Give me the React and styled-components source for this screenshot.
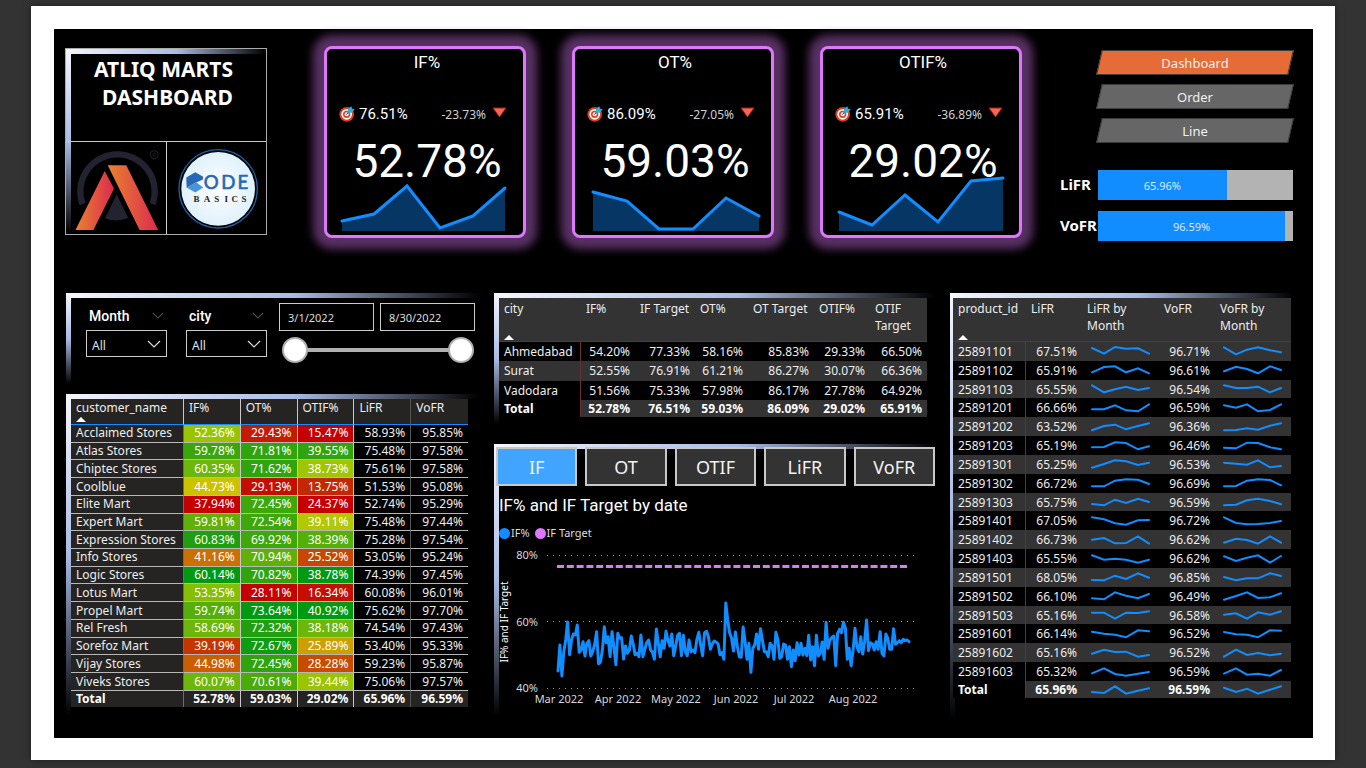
import React, { useState } from 'react';
import styled, { createGlobalStyle, css } from 'styled-components';

const sans = '"Noto Sans", "Open Sans", sans-serif';
const din = 'Roboto, "Noto Sans", sans-serif';

const GlobalStyle = createGlobalStyle`
  * { box-sizing: border-box; }
  body { margin: 0; background: #333; color: #fff; font-family: ${sans}; }
  button, input, select { font-family: inherit; }
`;

const Page = styled.div`
  min-height: 100vh;
  padding: 6px 31px 8px;
`;
const Sheet = styled.div`
  background: #fff;
  padding: 23px 22px 22px 23px;
  box-shadow: 0 0 8px rgba(0, 0, 0, 0.4);
`;
const Canvas = styled.main`
  background: #000;
  padding: 17px 20px 18px 11px;
`;
const TopRow = styled.header`
  display: grid;
  grid-template-columns: 202fr 57fr 698fr 38fr 233fr;
  height: 247px;
`;

/* ---------- gradient frame shared by every panel ---------- */
const frame = css`
  background:
    linear-gradient(to bottom, #f4f6fc, #a9bce6 50%, #000) left top / 5px 100% no-repeat,
    linear-gradient(to right, #f4f6fc, #a9bce6 55%, #000) left top / 100% 5px no-repeat,
    #000;
`;

/* ---------- brand ---------- */
const Brand = styled.section`
  ${frame}
  grid-column: 1;
  margin-top: 2px;
  height: 187px;
  display: grid;
  grid-template-rows: 93px 92px;
  border: 1px solid #aaa;
`;
const BrandTitle = styled.h1`
  margin: 0;
  padding: 6px 33px 0 0;
  text-align: right;
  font-size: 21px;
  line-height: 28px;
  font-weight: 700;
  border-bottom: 1px solid #c8c8c8;
`;
const Logos = styled.div`
  display: grid;
  grid-template-columns: 95fr 100fr;
  padding-left: 5px;
  min-height: 0;
`;
const LogoCell = styled.div`
  display: flex;
  min-width: 0;
  min-height: 0;
  & + & { border-left: 1px solid #ccc; }
  svg { width: 100%; height: 100%; }
`;

/* ---------- KPI cards ---------- */
const Kpis = styled.section`
  grid-column: 3;
  display: grid;
  grid-template-columns: repeat(3, 1fr);
  gap: 46px;
`;
const KpiCard = styled.article`
  height: 192px;
  border: 3px solid #dd78fb;
  border-radius: 8px;
  box-shadow: 0 0 8px 11px #583063;
  background: #000;
`;
const KpiTitle = styled.h2`
  margin: 1px 0 28px;
  padding-left: 4px;
  font: 400 17px/24px ${din};
  text-align: center;
`;
const KpiMeta = styled.div`
  display: flex;
  align-items: center;
  height: 24px;
  padding: 0 16px 0 12px;
  svg { flex: none; }
`;
const KpiTarget = styled.span`
  font: 400 15px/24px ${din};
  margin: 0 auto 0 4px;
`;
const KpiDelta = styled.span`
  font-size: 12px;
  color: #d0d0d0;
  margin-right: 6px;
`;
const KpiValue = styled.div`
  font: 400 46px/50px ${din};
  text-align: center;
  margin-top: 10px;
  padding-left: 4px;
`;
const Area = styled.svg`
  display: block;
  width: 100%;
  height: 48px;
  margin-top: -3px;
  overflow: visible;
`;

/* ---------- right hand column ---------- */
const Side = styled.section`
  grid-column: 5;
`;
const Nav = styled.nav`
  display: grid;
  gap: 9px;
  padding: 4px 2px 0 39px;
`;
const NavButton = styled.button`
  position: relative;
  z-index: 0;
  height: 25px;
  padding: 0;
  border: 0;
  background: none;
  color: #f0f0f0;
  font-size: 13px;
  &::before {
    content: '';
    position: absolute;
    inset: 0;
    z-index: -1;
    transform: skewX(-13deg);
    background: ${p => (p.$active ? '#e66c37' : '#666')};
    border: 1px solid #3c3c3c;
  }
`;
const Meters = styled.div`
  display: grid;
  gap: 11px;
  margin-top: 27px;
`;
const MeterRow = styled.div`
  display: grid;
  grid-template-columns: 38px 1fr;
  font-size: 15px;
  line-height: 28px;
  font-weight: 700;
`;
const MeterTrack = styled.div`
  height: 30px;
  background: #b3b3b3;
`;
const MeterFill = styled.div`
  height: 30px;
  background: #118dff;
  color: #d8eaff;
  font-size: 11px;
  font-weight: 400;
  line-height: 31px;
  text-align: center;
`;

/* ---------- lower area ---------- */
const Lower = styled.div`
  display: grid;
  grid-template-columns: 415fr 442fr 343fr;
  gap: 14px;
  align-items: start;
`;
const Column = styled.div`
  display: grid;
  gap: ${p => p.$gap}px;
  padding-left: ${p => p.$inset || 0}px;
  min-width: 0;
`;
const Panel = styled.section`
  ${frame}
  min-height: ${p => p.$h}px;
  padding: 5px ${p => p.$right || 0}px 0 ${p => p.$left || 5}px;
`;

/* ---------- filters ---------- */
const Filters = styled(Panel)`
  display: flex;
  padding: 10px 5px 0 20px;
`;
const Filter = styled.div`
  width: 81px;
  margin-right: ${p => p.$gap}px;
`;
const FilterHead = styled.div`
  display: flex;
  align-items: center;
  justify-content: space-between;
  height: 27px;
  padding: 0 3px 2px 3px;
  label { font: 500 14px/20px ${din}; }
`;
const SelectBox = styled.div`
  position: relative;
  svg { position: absolute; right: 6px; top: 10px; pointer-events: none; }
`;
const Select = styled.select`
  appearance: none;
  display: block;
  width: 100%;
  height: 27px;
  padding: 3px 20px 0 5px;
  border: 1px solid #ccc;
  border-radius: 0;
  background: #000;
  color: #e0e0e0;
  font-size: 12px;
`;
const RangeGroup = styled.div`
  flex: 1;
`;
const DateRow = styled.div`
  display: grid;
  grid-template-columns: 1fr 1fr;
  gap: 6px;
`;
const DateInput = styled.input`
  width: 100%;
  min-width: 0;
  height: 28px;
  padding: 0 8px;
  border: 1px solid #ccc;
  background: #000;
  color: #ddd;
  font-size: 11px;
`;
const Slider = styled.div`
  display: grid;
  align-items: center;
  height: 26px;
  margin: 6px 1px 0 3px;
  background: linear-gradient(#b0b0b0, #b0b0b0) center / 90% 4px no-repeat;
`;
const Thumb = styled.input`
  grid-area: 1 / 1;
  width: 100%;
  height: 26px;
  margin: 0;
  appearance: none;
  background: none;
  pointer-events: none;
  &::-webkit-slider-thumb {
    appearance: none;
    pointer-events: auto;
    width: 26px;
    height: 26px;
    border-radius: 50%;
    border: 2px solid #b0b0b0;
    background: #fff;
  }
`;

/* ---------- tables ---------- */
const Table = styled.table`
  width: 100%;
  table-layout: fixed;
  border-collapse: separate;
  border-spacing: 0;
  background: #000;
  font-size: 12px;
  line-height: 17px;
  white-space: nowrap;
  th, td { padding: 0 5px; font-weight: 400; text-align: right; }
  thead th { text-align: left; vertical-align: top; white-space: normal; color: #eee; }
  th:first-child { text-align: left; }
  tfoot th, tfoot td { font-weight: 700; color: #fff; }
`;
const CustomerTable = styled(Table)`
  height: 308px;
  line-height: 16px;
  color: #eee;
  thead th { height: 26px; background: #252423; border-bottom: 1px solid #118dff; padding-top: 1px; }
  tbody th, tbody td { border-bottom: 1px solid #b8b8b8; }
  tr > * { border-right: 1px solid #c8c8c8; }
  tr > :nth-child(5) { border-right-color: #555; }
  tr > :last-child { border-right: 0; }
  tbody th, tfoot th, tfoot td { background: #252423; }
  tbody th, tfoot th { border-right-color: #1a7fe0; }
`;
const HeatCell = styled.td`
  background: ${p => p.$tone};
  color: #fff;
`;
const StripedTable = styled(Table)`
  color: #eee;
  thead th { height: 44px; background: #333; border-bottom: 1px solid #6b2e32; padding-top: 2px; }
  tbody th, tfoot th { border-right: 1px solid #6b2e32; }
  tbody tr:nth-child(${p => p.$stripe}) > * { background: #333; }
  tfoot td { background: #333; }
`;
const CityTable = styled(StripedTable)`
  height: 119px;
`;
const ProductTable = styled(StripedTable)`
  height: 400px;
`;
const SortMark = styled.svg`
  display: block;
  margin-top: ${p => p.$top}px;
`;
const SparkLine = styled.svg`
  display: block;
  margin: 0 3px 0 auto;
`;

/* ---------- chart ---------- */
const ChartPanel = styled(Panel)`
  padding-top: 3px;
`;
const Tabs = styled.div`
  display: grid;
  grid-template-columns: repeat(5, 1fr);
  gap: 8px;
  margin-left: -3px;
`;
const Tab = styled.button`
  height: 39px;
  padding: 0;
  border: 2px solid #c8c8c8;
  background: ${p => (p.$active ? '#41a4ff' : '#333')};
  color: #f2f2f2;
  font-size: 18px;
`;
const ChartTitle = styled.h2`
  margin: 7px 0;
  font: 400 17px/24px ${din};
`;
const Legend = styled.ul`
  display: flex;
  gap: 5px;
  margin: 0 0 2px;
  padding: 0;
  list-style: none;
  font-size: 11px;
  line-height: 18px;
  color: #ddd;
`;
const LegendItem = styled.li`
  display: flex;
  align-items: center;
  gap: 1px;
  &::before {
    content: '';
    width: 11px;
    height: 11px;
    border-radius: 50%;
    background: ${p => p.$color};
  }
`;
const Chart = styled.svg`
  display: block;
  width: 100%;
  height: auto;
  overflow: visible;
  font-family: ${sans};
  font-size: 11px;
`;

/* ---------- data ---------- */
const kpis = [
  { name: 'IF%', target: '76.51%', delta: '-23.73%', value: '52.78%', pts: [[15, 38], [47, 31], [80, 3], [113, 45], [146, 33], [178, 5]] },
  { name: 'OT%', target: '86.09%', delta: '-27.05%', value: '59.03%', pts: [[18, 9], [52, 18], [84, 46], [118, 46], [151, 15], [184, 33]] },
  { name: 'OTIF%', target: '65.91%', delta: '-36.89%', value: '29.02%', pts: [[16, 29], [49, 42], [82, 12], [115, 39], [148, -2], [180, -5]] },
];

const customers = [
  ['Acclaimed Stores', '52.36%', '#9bc400', '29.43%', '#c41c00', '15.47%', '#c40000', '58.93%', '95.85%'],
  ['Atlas Stores', '59.78%', '#3aa60a', '71.81%', '#30a40c', '39.55%', '#30a40c', '75.48%', '97.58%'],
  ['Chiptec Stores', '60.35%', '#6db60a', '71.62%', '#30a40c', '38.73%', '#a0c603', '75.61%', '97.58%'],
  ['Coolblue', '44.73%', '#cdc200', '29.13%', '#c40e00', '13.75%', '#c42800', '51.53%', '95.08%'],
  ['Elite Mart', '37.94%', '#c40000', '72.45%', '#3ea70a', '24.37%', '#c40000', '52.74%', '95.29%'],
  ['Expert Mart', '59.81%', '#5fb10a', '72.54%', '#3ea70a', '39.11%', '#b4c800', '75.48%', '97.44%'],
  ['Expression Stores', '60.83%', '#1f9f0f', '69.92%', '#3ea70a', '38.39%', '#55ae0a', '75.28%', '97.54%'],
  ['Info Stores', '41.16%', '#cc7000', '70.94%', '#5fb10a', '25.52%', '#c84600', '53.05%', '95.24%'],
  ['Logic Stores', '60.14%', '#009a12', '70.82%', '#30a40c', '38.78%', '#009a12', '74.39%', '97.45%'],
  ['Lotus Mart', '53.35%', '#86bd05', '28.11%', '#c40000', '16.34%', '#c40e00', '60.08%', '96.01%'],
  ['Propel Mart', '59.74%', '#55ae0a', '73.64%', '#009a12', '40.92%', '#009a12', '75.62%', '97.70%'],
  ['Rel Fresh', '58.69%', '#6db60a', '72.32%', '#229f0e', '38.18%', '#6db60a', '74.54%', '97.43%'],
  ['Sorefoz Mart', '39.19%', '#c43500', '72.67%', '#109c10', '25.89%', '#cca000', '53.40%', '95.33%'],
  ['Vijay Stores', '44.98%', '#c95f00', '72.45%', '#30a40c', '28.28%', '#c84c00', '59.23%', '95.87%'],
  ['Viveks Stores', '60.07%', '#6db60a', '70.61%', '#4aab0a', '39.44%', '#9bc400', '75.06%', '97.57%'],
];

const cities = [
  ['Ahmedabad', '54.20%', '77.33%', '58.16%', '85.83%', '29.33%', '66.50%'],
  ['Surat', '52.55%', '76.91%', '61.21%', '86.27%', '30.07%', '66.36%'],
  ['Vadodara', '51.56%', '75.33%', '57.98%', '86.17%', '27.78%', '64.92%'],
];
const cityTotal = ['52.78%', '76.51%', '59.03%', '86.09%', '29.02%', '65.91%'];

const products = [
  ['25891101', '67.51%', [-9, 8, -12, -7, -8, 8], '96.71%', [-11, 10, -4, -11, -2, 4]],
  ['25891102', '65.91%', [7, -9, -11, 7, -5, 10], '96.61%', [4, -10, -3, 10, -11, 0]],
  ['25891103', '65.55%', [-11, 10, 1, -7, 3, -3], '96.54%', [-11, -3, -3, -7, 10, -3]],
  ['25891201', '66.66%', [4, 4, -8, 7, 10, -11], '96.59%', [-8, -1, -11, 10, 6, -11]],
  ['25891202', '63.52%', [10, -3, -7, 7, -3, -11], '96.36%', [10, 9, 4, 8, -4, -11]],
  ['25891203', '65.19%', [4, 3, -11, -9, 10, 1], '96.46%', [5, 7, -10, -9, 4, 10]],
  ['25891301', '65.25%', [11, 0, -11, -8, 3, -4], '96.53%', [-4, -1, 2, -11, 10, 6]],
  ['25891302', '66.72%', [10, 10, -7, -11, -10, 3], '96.69%', [10, 9, -7, -11, -9, 7]],
  ['25891303', '65.75%', [6, 10, -7, 3, -10, 0], '96.59%', [10, 8, -5, -10, -3, 7]],
  ['25891401', '67.05%', [-11, -5, 7, 11, -2, -3], '96.72%', [-11, 6, 10, 9, 6, 0]],
  ['25891402', '66.73%', [-1, -6, 10, 9, -11, 11], '96.62%', [8, -4, 0, 11, -11, 8]],
  ['25891403', '65.55%', [-11, 2, -1, 2, 11, 2], '96.62%', [-8, 6, -4, -11, 11, -9]],
  ['25891501', '68.05%', [9, 10, -4, 6, -11, 2], '96.85%', [0, 10, 4, 4, -11, -3]],
  ['25891502', '66.10%', [7, 10, -11, -1, 7, -6], '96.49%', [11, 0, -11, 6, 4, -8]],
  ['25891503', '65.16%', [-7, -7, 11, -7, -6, -11], '96.58%', [-1, -5, 11, -8, -1, -11]],
  ['25891601', '66.14%', [-7, -1, 2, 10, -11, -8], '96.52%', [-6, 1, 2, 10, -11, -10]],
  ['25891602', '65.16%', [2, -10, -3, -4, 11, 6], '96.52%', [11, -10, 6, 0, 7, 2]],
  ['25891603', '65.32%', [4, -11, 6, 11, 5, 0], '96.59%', [5, -11, 8, 5, 11, -6]],
];

/* daily IF%, in thirds of a unit below the chart's origin */
const daily = [
  543, 465, 558, 485, 450, 396, 494, 450, 432, 435, 405, 487, 480, 455, 498, 460, 452, 498, 485, 465, 425, 521, 517, 480, 410,
  458, 440, 500, 425, 470, 524, 430, 445, 443, 507, 468, 490, 480, 438, 462, 494, 490, 500, 435, 500, 478, 458, 450, 480, 487,
  508, 417, 460, 500, 452, 475, 424, 450, 468, 432, 497, 470, 436, 430, 497, 436, 485, 497, 450, 485, 480, 488, 448, 427, 465,
  497, 428, 424, 440, 478, 462, 453, 456, 462, 494, 488, 508, 339, 390, 428, 445, 483, 426, 470, 500, 502, 411, 455, 508, 460,
  547, 475, 465, 432, 478, 416, 450, 485, 485, 500, 460, 468, 508, 427, 450, 505, 500, 462, 465, 508, 470, 530, 480, 512, 458,
  495, 460, 495, 475, 497, 436, 510, 470, 527, 436, 498, 490, 456, 508, 397, 475, 450, 442, 438, 527, 430, 418, 428, 397, 415,
  508, 475, 527, 480, 415, 470, 485, 440, 492, 455, 390, 482, 458, 462, 480, 455, 478, 425, 490, 498, 432, 445, 478, 478, 416,
  463, 458, 452, 458, 448, 452, 450, 455,
];
const dailyPoints = daily
  .map((y, i) => `${(59 + (i * 351) / (daily.length - 1)).toFixed(1)},${(y / 3 - 54).toFixed(1)}`)
  .join(' ');

/* ---------- small drawings ---------- */
const Target = () => (
  <svg width="16" height="16" viewBox="0 0 48 48" aria-hidden="true">
    <circle cx="23" cy="25" r="22" fill="#e8391f" />
    <circle cx="23" cy="25" r="16" fill="#fff" />
    <circle cx="23" cy="25" r="11" fill="#e8391f" />
    <circle cx="23" cy="25" r="6" fill="#fff" />
    <path d="M22 26 34 13" stroke="#4a3340" strokeWidth="3" />
    <path d="M26 20 27 8 37 1 39 8 47 9 39 20Z" fill="#27b3dd" />
  </svg>
);
const DownMark = () => (
  <svg width="15" height="15" viewBox="0 0 45 45" aria-hidden="true">
    <path d="M3 3H42L22.500 30Z" fill="#f4655a" stroke="#a8200d" strokeWidth="3" />
  </svg>
);
const Chevron = ({ w = 14, color = '#ddd' }) => (
  <svg width={w} height={w / 2 + 1} viewBox="0 0 14 8" fill="none" stroke={color} strokeWidth="1.2" aria-hidden="true">
    <path d="M1 1 7 7 13 1" />
  </svg>
);
const Sort = ({ top }) => (
  <SortMark $top={top} width="10" height="5" viewBox="0 0 10 5" aria-hidden="true">
    <path d="M0 5 5 0 10 5Z" fill="#fff" />
  </SortMark>
);
const xs = [1, 13, 24, 35, 47, 58];
const Spark = ({ ys }) => (
  <SparkLine width="60" height="10" viewBox="0 0 60 10" aria-hidden="true">
    <polyline
      points={ys.map((y, i) => `${xs[i]},${(5 + y / 3).toFixed(1)}`).join(' ')}
      fill="none" stroke="#118dff" strokeWidth="2" strokeLinecap="round"
    />
  </SparkLine>
);
const AtliqLogo = () => (
  <svg viewBox="123 425 285 277" role="img" aria-label="AtliQ">
    <defs>
      <linearGradient id="leg"><stop offset="0" stopColor="#e9822f" /><stop offset="1" stopColor="#dc2a50" /></linearGradient>
    </defs>
    <path d="M157 612A112 112 0 1 1 368 612" fill="none" stroke="#222230" strokeWidth="19" />
    <path d="M260 582 295 654Q260 668 225 655Z" fill="#222230" />
    <path d="M224 512 252 565 190 690H136Z" fill="url(#leg)" />
    <path d="M233 495H289L385 690H329Z" fill="url(#leg)" />
    <circle cx="373" cy="463" r="12" fill="none" stroke="#222230" strokeWidth="3" />
    <text x="373" y="470" textAnchor="middle" fontSize="18" fill="#222230">R</text>
  </svg>
);
const CodebasicsLogo = () => (
  <svg viewBox="413 425 292 277" role="img" aria-label="Codebasics">
    <defs>
      <radialGradient id="disc"><stop offset="0" stopColor="#fff" /><stop offset="1" stopColor="#dff1fb" /></radialGradient>
    </defs>
    <circle cx="564" cy="566" r="118" fill="#000" stroke="#1d5fa5" strokeWidth="4" />
    <circle cx="564" cy="566" r="111" fill="url(#disc)" />
    <path d="M468 532 495 516 519 530 518 538 496 548 469 563Z" fill="#2767b5" />
    <path d="M469 562 498 546 519 562 495 577Z" fill="#4796d8" />
    <g fontFamily="Lato" fontSize="56" fill="#2767b5" stroke="#2767b5" strokeWidth="2">
      <text x="521" y="568">O</text>
      <text x="573" y="568">D</text>
      <text x="622" y="568">E</text>
    </g>
    <text x="490 521 552 583 604 634" y="605" fontFamily="Liberation Serif" fontSize="27" fontWeight="700" fill="#222">BASICS</text>
  </svg>
);

/* ---------- parts ---------- */
function Kpi({ name, target, delta, value, pts }) {
  const line = pts.map(p => p.join(',')).join(' ');
  return (
    <KpiCard>
      <KpiTitle>{name}</KpiTitle>
      <KpiMeta>
        <Target />
        <KpiTarget>{target}</KpiTarget>
        <KpiDelta>{delta}</KpiDelta>
        <DownMark />
      </KpiMeta>
      <KpiValue>{value}</KpiValue>
      <Area viewBox="0 0 196 48" preserveAspectRatio="none">
        <polygon points={`${pts[0][0]},48 ${line} ${pts[5][0]},48`} fill="#063764" />
        <polyline points={line} fill="none" stroke="#118dff" strokeWidth="3" strokeLinecap="round" />
      </Area>
    </KpiCard>
  );
}

function Meter({ label, value, scale }) {
  return (
    <MeterRow>
      <span>{label}</span>
      <MeterTrack role="meter" aria-label={label} aria-valuenow={value} aria-valuemin={0} aria-valuemax={100}>
        <MeterFill style={{ width: `${scale}%` }}>{value}%</MeterFill>
      </MeterTrack>
    </MeterRow>
  );
}

function FilterField({ id, label, gap }) {
  return (
    <Filter $gap={gap}>
      <FilterHead><label htmlFor={id}>{label}</label><Chevron w={12} color="#555" /></FilterHead>
      <SelectBox>
        <Select id={id}><option>All</option></Select>
        <Chevron />
      </SelectBox>
    </Filter>
  );
}

const gridX = 'M48 11.500H417M48 77.500H417M48 144.500H417';
const months = [['Mar 2022', 60], ['Apr 2022', 119], ['May 2022', 177], ['Jun 2022', 237], ['Jul 2022', 295], ['Aug 2022', 354]];

export default function App() {
  const [page, setPage] = useState('Dashboard');
  const [metric, setMetric] = useState('IF');
  return (
    <Page>
      <GlobalStyle />
      <Sheet>
        <Canvas>
          <TopRow>
            <Brand>
              <BrandTitle>ATLIQ MARTS<br />DASHBOARD</BrandTitle>
              <Logos>
                <LogoCell><AtliqLogo /></LogoCell>
                <LogoCell><CodebasicsLogo /></LogoCell>
              </Logos>
            </Brand>
            <Kpis>{kpis.map(k => <Kpi key={k.name} {...k} />)}</Kpis>
            <Side>
              <Nav>
                {['Dashboard', 'Order', 'Line'].map(n => (
                  <NavButton key={n} $active={page === n} onClick={() => setPage(n)}>{n}</NavButton>
                ))}
              </Nav>
              <Meters>
                <Meter label="LiFR" value="65.96" scale={65.96} />
                <Meter label="VoFR" value="96.59" scale={96} />
              </Meters>
            </Side>
          </TopRow>

          <Lower>
            <Column $gap={10} $inset={1}>
              <Filters $h={91}>
                <FilterField id="month" label="Month" gap={19} />
                <FilterField id="city" label="city" gap={12} />
                <RangeGroup>
                  <DateRow>
                    <DateInput aria-label="Start date" defaultValue="3/1/2022" />
                    <DateInput aria-label="End date" defaultValue="8/30/2022" />
                  </DateRow>
                  <Slider>
                    <Thumb type="range" aria-label="Range start" min="0" max="182" defaultValue="0" />
                    <Thumb type="range" aria-label="Range end" min="0" max="182" defaultValue="182" />
                  </Slider>
                </RangeGroup>
              </Filters>
              <Panel $h={322} $right={12}>
                <CustomerTable>
                  <colgroup><col style={{ width: '113px' }} /><col /><col /><col /><col /><col /></colgroup>
                  <thead>
                    <tr>
                      <th>customer_name<Sort top={1} /></th>
                      {['IF%', 'OT%', 'OTIF%', 'LiFR', 'VoFR'].map(h => <th key={h}>{h}</th>)}
                    </tr>
                  </thead>
                  <tbody>
                    {customers.map(([n, a, ac, b, bc, c, cc, l, v]) => (
                      <tr key={n}>
                        <th>{n}</th>
                        <HeatCell $tone={ac}>{a}</HeatCell>
                        <HeatCell $tone={bc}>{b}</HeatCell>
                        <HeatCell $tone={cc}>{c}</HeatCell>
                        <td>{l}</td>
                        <td>{v}</td>
                      </tr>
                    ))}
                  </tbody>
                  <tfoot>
                    <tr>
                      <th>Total</th>
                      {['52.78%', '59.03%', '29.02%', '65.96%', '96.59%'].map(t => <td key={t}>{t}</td>)}
                    </tr>
                  </tfoot>
                </CustomerTable>
              </Panel>
            </Column>

            <Column $gap={20}>
              <Panel $h={131} $right={9}>
                <CityTable $stripe="even">
                  <colgroup>
                    {[82, 54, 60, 53, 66, 56, 57].map((w, i) => <col key={i} style={{ width: `${w}px` }} />)}
                  </colgroup>
                  <thead>
                    <tr>
                      <th>city<Sort top={18} /></th>
                      {['IF%', 'IF Target', 'OT%', 'OT Target', 'OTIF%', 'OTIF Target'].map(h => <th key={h}>{h}</th>)}
                    </tr>
                  </thead>
                  <tbody>
                    {cities.map(([n, ...v]) => (
                      <tr key={n}><th>{n}</th>{v.map(x => <td key={x}>{x}</td>)}</tr>
                    ))}
                  </tbody>
                  <tfoot>
                    <tr><th>Total</th>{cityTotal.map(x => <td key={x}>{x}</td>)}</tr>
                  </tfoot>
                </CityTable>
              </Panel>

              <ChartPanel $h={272} $right={1}>
                <Tabs>
                  {['IF', 'OT', 'OTIF', 'LiFR', 'VoFR'].map(t => (
                    <Tab key={t} $active={metric === t} onClick={() => setMetric(t)}>{t}</Tab>
                  ))}
                </Tabs>
                <ChartTitle>IF% and IF Target by date</ChartTitle>
                <Legend>
                  <LegendItem $color="#118dff">IF%</LegendItem>
                  <LegendItem $color="#dd78fb">IF Target</LegendItem>
                </Legend>
                <Chart viewBox="0 0 436 172">
                  <path d={gridX} stroke="#999" strokeWidth="1" strokeDasharray="1 5" />
                  <g fill="#d8d8d8">
                    <text x="39" y="15" textAnchor="end">80%</text>
                    <text x="39" y="82" textAnchor="end">60%</text>
                    <text x="39" y="148" textAnchor="end">40%</text>
                    {months.map(([m, x]) => <text key={m} x={x} y="159" textAnchor="middle">{m}</text>)}
                  </g>
                  <text transform="translate(9 78) rotate(-90)" textAnchor="middle" fontSize="10" fill="#fff">IF% and IF Target</text>
                  <path d="M58 22.500H410" stroke="#dd78fb" strokeWidth="3" strokeDasharray="7 2.800" />
                  <polyline points={dailyPoints} fill="none" stroke="#118dff" strokeWidth="3" strokeLinejoin="round" strokeLinecap="round" />
                </Chart>
              </ChartPanel>
            </Column>

            <Panel $h={427} $left={3} $right={2}>
              <ProductTable $stripe="odd">
                <colgroup>
                  {[73, 56, 77, 56, 76].map((w, i) => <col key={i} style={{ width: `${w}px` }} />)}
                </colgroup>
                <thead>
                  <tr>
                    <th>product_id<Sort top={18} /></th>
                    <th>LiFR</th><th>LiFR by Month</th><th>VoFR</th><th>VoFR by Month</th>
                  </tr>
                </thead>
                <tbody>
                  {products.map(([id, l, ls, v, vs]) => (
                    <tr key={id}>
                      <th>{id}</th><td>{l}</td><td><Spark ys={ls} /></td><td>{v}</td><td><Spark ys={vs} /></td>
                    </tr>
                  ))}
                </tbody>
                <tfoot>
                  <tr>
                    <th>Total</th>
                    <td>65.96%</td><td><Spark ys={[6, 9, -11, 11, 2, -5]} /></td>
                    <td>96.59%</td><td><Spark ys={[-7, 6, -4, 11, -1, -11]} /></td>
                  </tr>
                </tfoot>
              </ProductTable>
            </Panel>
          </Lower>
        </Canvas>
      </Sheet>
    </Page>
  );
}
